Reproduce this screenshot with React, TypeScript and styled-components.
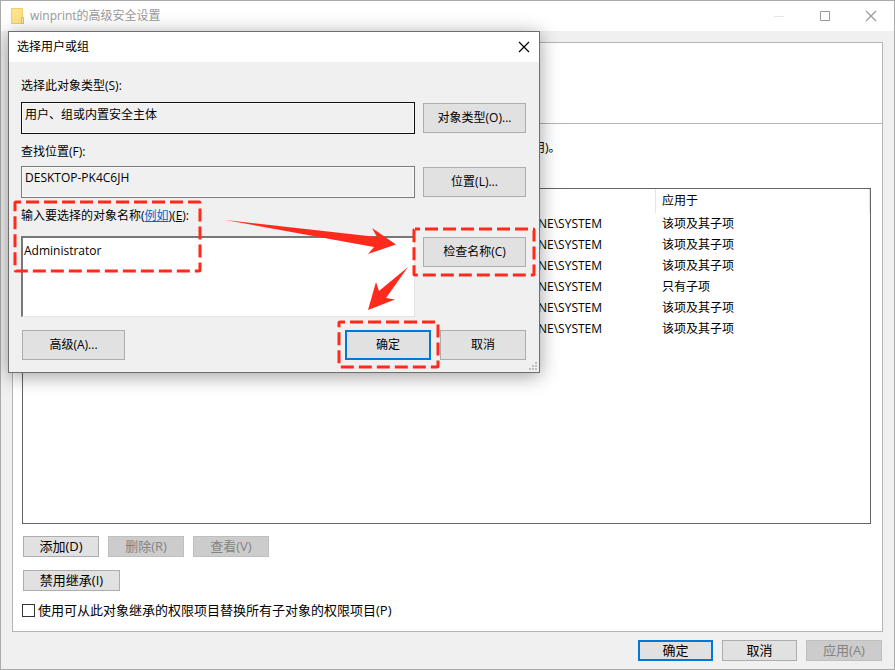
import React from "react";
import styled, { createGlobalStyle, css } from "styled-components";

const GlobalStyle = createGlobalStyle`
  *, *::before, *::after { box-sizing: border-box; }
  body {
    margin: 0;
    background: #f0f0f0;
    color: #000;
    font: 12px/16px "Open Sans", "Noto Sans CJK SC", sans-serif;
  }
  button, input, textarea { font: inherit; color: inherit; }
`;

const AppWindow = styled.main`
  position: relative;
  display: flex;
  flex-direction: column;
  min-height: 100vh;
  border: 1px solid #aaa;
  background: #f0f0f0;
`;

const TitleBar = styled.header`
  display: flex;
  align-items: center;
  gap: 5px;
  height: 30px;
  padding-left: 10px;
  background: #fff;
  color: #999;
`;

const Title = styled.h1`
  flex: 1;
  margin: 0;
  font-size: 12px;
  font-weight: 400;
`;

const CaptionButtons = styled.div`
  display: flex;
  align-self: stretch;
`;

const CaptionButton = styled.button<{ $width: number }>`
  display: flex;
  align-items: center;
  justify-content: center;
  width: ${(p) => p.$width}px;
  padding: 0 0 1px;
  border: 0;
  background: transparent;
`;

const Panel = styled.section`
  flex: 1;
  display: flex;
  flex-direction: column;
  margin: 11px 11px 0;
  border: 1px solid #b4b4b4;
  background: #fff;
`;

const Summary = styled.div`
  height: 81px;
  border-bottom: 1px solid #b4b4b4;
`;

const PanelBody = styled.div`
  flex: 1;
  display: flex;
  flex-direction: column;
  align-items: flex-start;
  padding: 16px 11px 13px 9px;
`;

const Note = styled.p`
  margin: 0 0 32px;
  padding-left: 511px;
`;

const TableFrame = styled.div`
  flex: 1;
  align-self: stretch;
  min-height: 160px;
  border: 1px solid #646464;
`;

const PermissionTable = styled.table`
  width: 100%;
  border-collapse: separate;
  border-spacing: 0;
  table-layout: fixed;
  text-align: left;

  th, td {
    height: 21px;
    padding: 0 0 0 6px;
    font-weight: 400;
  }
  th {
    height: 24px;
    border-right: 1px solid #e5e5e5;
  }
  th:first-child { width: 633px; }
  th:first-child, td:first-child { padding-left: 515px; }
`;

const ButtonRow = styled.div<{ $top: number }>`
  display: flex;
  gap: 9px;
  margin: ${(p) => p.$top}px 0 0 1px;
`;

const Button = styled.button<{ $width: number; $tall?: boolean; $primary?: boolean }>`
  display: flex;
  align-items: center;
  justify-content: center;
  width: ${(p) => p.$width}px;
  height: ${(p) => (p.$tall ? 30 : 21)}px;
  padding: 0 0 ${(p) => (p.$tall ? 0 : 2)}px;
  border: 1px solid #adadad;
  background: #e1e1e1;
  font-size: ${(p) => (p.$tall ? 12 : 13)}px;
  white-space: nowrap;

  ${(p) => p.$primary && css`border: 2px solid #0078d7;`}

  &:disabled {
    border-color: #bfbfbf;
    background: #ccc;
    color: #838383;
  }
`;

const CheckLabel = styled.label`
  display: flex;
  align-items: center;
  gap: 3px;
  margin-top: 11px;
  font-size: 13px;
`;

const CheckBox = styled.input`
  appearance: none;
  width: 13px;
  height: 13px;
  margin: 1px 0 0;
  border: 1px solid #333;
  background: #fff;
`;

const Footer = styled.footer`
  display: flex;
  justify-content: flex-end;
  gap: 9px;
  padding: 8px 12px;
`;

const Dialog = styled.section`
  position: absolute;
  top: 30px;
  left: 7px;
  width: 532px;
  border: 1px solid #6e6e6e;
  background: #f0f0f0;
  box-shadow: 0 3px 18px rgba(0, 0, 0, 0.38);
`;

const DialogTitleBar = styled.header`
  display: flex;
  align-items: center;
  height: 30px;
  padding-left: 8px;
  background: #fff;
`;

const DialogForm = styled.form`
  display: grid;
  grid-template-columns: 1fr 103px;
  column-gap: 8px;
  padding: 16px 13px 12px 12px;
`;

const FieldLabel = styled.div<{ $bottom: number }>`
  grid-column: 1 / -1;
  margin-bottom: ${(p) => p.$bottom}px;
`;

const Field = styled.input<{ $strong?: boolean }>`
  width: 100%;
  height: 32px;
  margin: 0 0 10px;
  padding: 0 3px 9px;
  border: 1px solid ${(p) => (p.$strong ? "#111" : "#7a7a7a")};
  background: #f0f0f0;
  box-shadow: inset 0 0 0 1px #fafafa;
  outline: 0;
`;

const NamesBox = styled.textarea`
  display: block;
  width: 100%;
  height: 81px;
  padding: 5px 1px;
  border: 2px solid;
  border-color: #777 #e3e3e3 #e3e3e3 #777;
  border-right-width: 1px;
  border-bottom-width: 1px;
  background: #fff;
  font-size: 12px;
  line-height: 16px;
  resize: none;
  outline: 0;
`;

const SideButton = styled(Button)`
  margin-top: 1px;
`;

const Link = styled.a`
  color: #0066cc;
  text-decoration: underline;
`;

const DialogActions = styled.div`
  grid-column: 1 / -1;
  display: flex;
  gap: 9px;
  margin: 13px 0 0 1px;
`;

const Spacer = styled.span`
  flex: 1;
`;

const Grip = styled.svg`
  position: absolute;
  right: 2px;
  bottom: 2px;
`;

const Annotations = styled.svg`
  position: absolute;
  top: -1px;
  left: -1px;
  pointer-events: none;
`;

function FolderIcon() {
  return (
    <svg width="14" height="17" viewBox="0 0 14 17" aria-hidden="true">
      <path d="M.5.5h11v9l1 1v5H.5z" fill="#ffe38a" stroke="#f0cf68" />
      <path d="M10.500 9.500h2v6h-2z" fill="#ffeeb5" stroke="#e6bd45" />
    </svg>
  );
}

function CrossIcon() {
  return (
    <svg width="12" height="12" viewBox="0 0 12 12" aria-hidden="true">
      <path d="M1 1l10 10M11 1L1 11" fill="none" stroke="currentColor" strokeWidth="1.2" />
    </svg>
  );
}

const frames = [
  { x: 7, y: 171, width: 185, height: 69 },
  { x: 406, y: 198, width: 120, height: 46 },
  { x: 331, y: 291, width: 99, height: 45 },
];

const rows = [
  { id: 1, source: "NE\\SYSTEM", scope: "该项及其子项" },
  { id: 2, source: "NE\\SYSTEM", scope: "该项及其子项" },
  { id: 3, source: "NE\\SYSTEM", scope: "该项及其子项" },
  { id: 4, source: "NE\\SYSTEM", scope: "只有子项" },
  { id: 5, source: "NE\\SYSTEM", scope: "该项及其子项" },
  { id: 6, source: "NE\\SYSTEM", scope: "该项及其子项" },
];

function SelectDialog() {
  return (
    <Dialog role="dialog" aria-labelledby="dialog-title">
      <DialogTitleBar>
        <Title as="h2" id="dialog-title">选择用户或组</Title>
        <CaptionButton type="button" $width={30} aria-label="关闭">
          <CrossIcon />
        </CaptionButton>
      </DialogTitleBar>
      <DialogForm onSubmit={(e) => e.preventDefault()}>
        <FieldLabel $bottom={8}>
          <label htmlFor="object-type">选择此对象类型(S):</label>
        </FieldLabel>
        <Field id="object-type" $strong readOnly defaultValue="用户、组或内置安全主体" />
        <SideButton type="button" $width={103} $tall>对象类型(O)...</SideButton>

        <FieldLabel $bottom={6}>
          <label htmlFor="location">查找位置(F):</label>
        </FieldLabel>
        <Field id="location" readOnly defaultValue="DESKTOP-PK4C6JH" />
        <SideButton type="button" $width={103} $tall>位置(L)...</SideButton>

        <FieldLabel $bottom={12}>
          <label htmlFor="names">
            输入要选择的对象名称(<Link href="#examples">例如</Link>)(<u>E</u>):
          </label>
        </FieldLabel>
        <NamesBox id="names" spellCheck={false} defaultValue="Administrator" />
        <SideButton type="button" $width={103} $tall>检查名称(C)</SideButton>

        <DialogActions>
          <Button type="button" $width={103} $tall>高级(A)...</Button>
          <Spacer />
          <Button type="submit" $width={86} $tall $primary>确定</Button>
          <Button type="button" $width={86} $tall>取消</Button>
        </DialogActions>
      </DialogForm>
      <Grip width="8" height="8" viewBox="0 0 8 8" aria-hidden="true">
        <path
          d="M6 0h2v2h-2zM3 3h2v2h-2zM6 3h2v2h-2zM0 6h2v2h-2zM3 6h2v2h-2zM6 6h2v2h-2z"
          fill="#bfbfbf"
        />
      </Grip>
      <Annotations width="532" height="342" viewBox="0 0 532 342" aria-hidden="true">
        {frames.map((f) => (
          <rect
            key={f.x}
            {...f}
            rx="1"
            fill="none"
            stroke="#ff2a1c"
            strokeWidth="3"
            strokeDasharray="13 5"
            strokeDashoffset="8"
          />
        ))}
        <path d="M217 189L369 206L364 197L388 213.500L360 223L366 216Z" fill="#ff2a1c" />
        <path d="M400 236L378 267L387 268.500L360 279L368 251L371 260Z" fill="#ff2a1c" />
      </Annotations>
    </Dialog>
  );
}

export default function App() {
  return (
    <>
      <GlobalStyle />
      <AppWindow>
        <TitleBar>
          <FolderIcon />
          <Title>winprint的高级安全设置</Title>
          <CaptionButtons>
            <CaptionButton type="button" $width={46} disabled aria-label="最小化">
              <svg width="10" height="10" viewBox="0 0 10 10" aria-hidden="true">
                <path d="M0 5.500h10" stroke="#e5e5e5" />
              </svg>
            </CaptionButton>
            <CaptionButton type="button" $width={46} aria-label="最大化">
              <svg width="10" height="10" viewBox="0 0 10 10" aria-hidden="true">
                <path d="M.5.5h9v9h-9z" fill="none" stroke="currentColor" />
              </svg>
            </CaptionButton>
            <CaptionButton type="button" $width={46} aria-label="关闭">
              <CrossIcon />
            </CaptionButton>
          </CaptionButtons>
        </TitleBar>

        <Panel>
          <Summary />
          <PanelBody>
            <Note>用)。</Note>
            <TableFrame>
              <PermissionTable>
                <thead>
                  <tr>
                    <th aria-label="继承于" />
                    <th>应用于</th>
                  </tr>
                </thead>
                <tbody>
                  {rows.map((row) => (
                    <tr key={row.id}>
                      <td>{row.source}</td>
                      <td>{row.scope}</td>
                    </tr>
                  ))}
                </tbody>
              </PermissionTable>
            </TableFrame>
            <ButtonRow $top={12}>
              <Button type="button" $width={76}>添加(D)</Button>
              <Button type="button" $width={76} disabled>删除(R)</Button>
              <Button type="button" $width={76} disabled>查看(V)</Button>
            </ButtonRow>
            <ButtonRow $top={13}>
              <Button type="button" $width={97}>禁用继承(I)</Button>
            </ButtonRow>
            <CheckLabel>
              <CheckBox type="checkbox" />
              使用可从此对象继承的权限项目替换所有子对象的权限项目(P)
            </CheckLabel>
          </PanelBody>
        </Panel>

        <Footer>
          <Button type="button" $width={75} $primary>确定</Button>
          <Button type="button" $width={75}>取消</Button>
          <Button type="button" $width={76} disabled>应用(A)</Button>
        </Footer>

        <SelectDialog />
      </AppWindow>
    </>
  );
}
